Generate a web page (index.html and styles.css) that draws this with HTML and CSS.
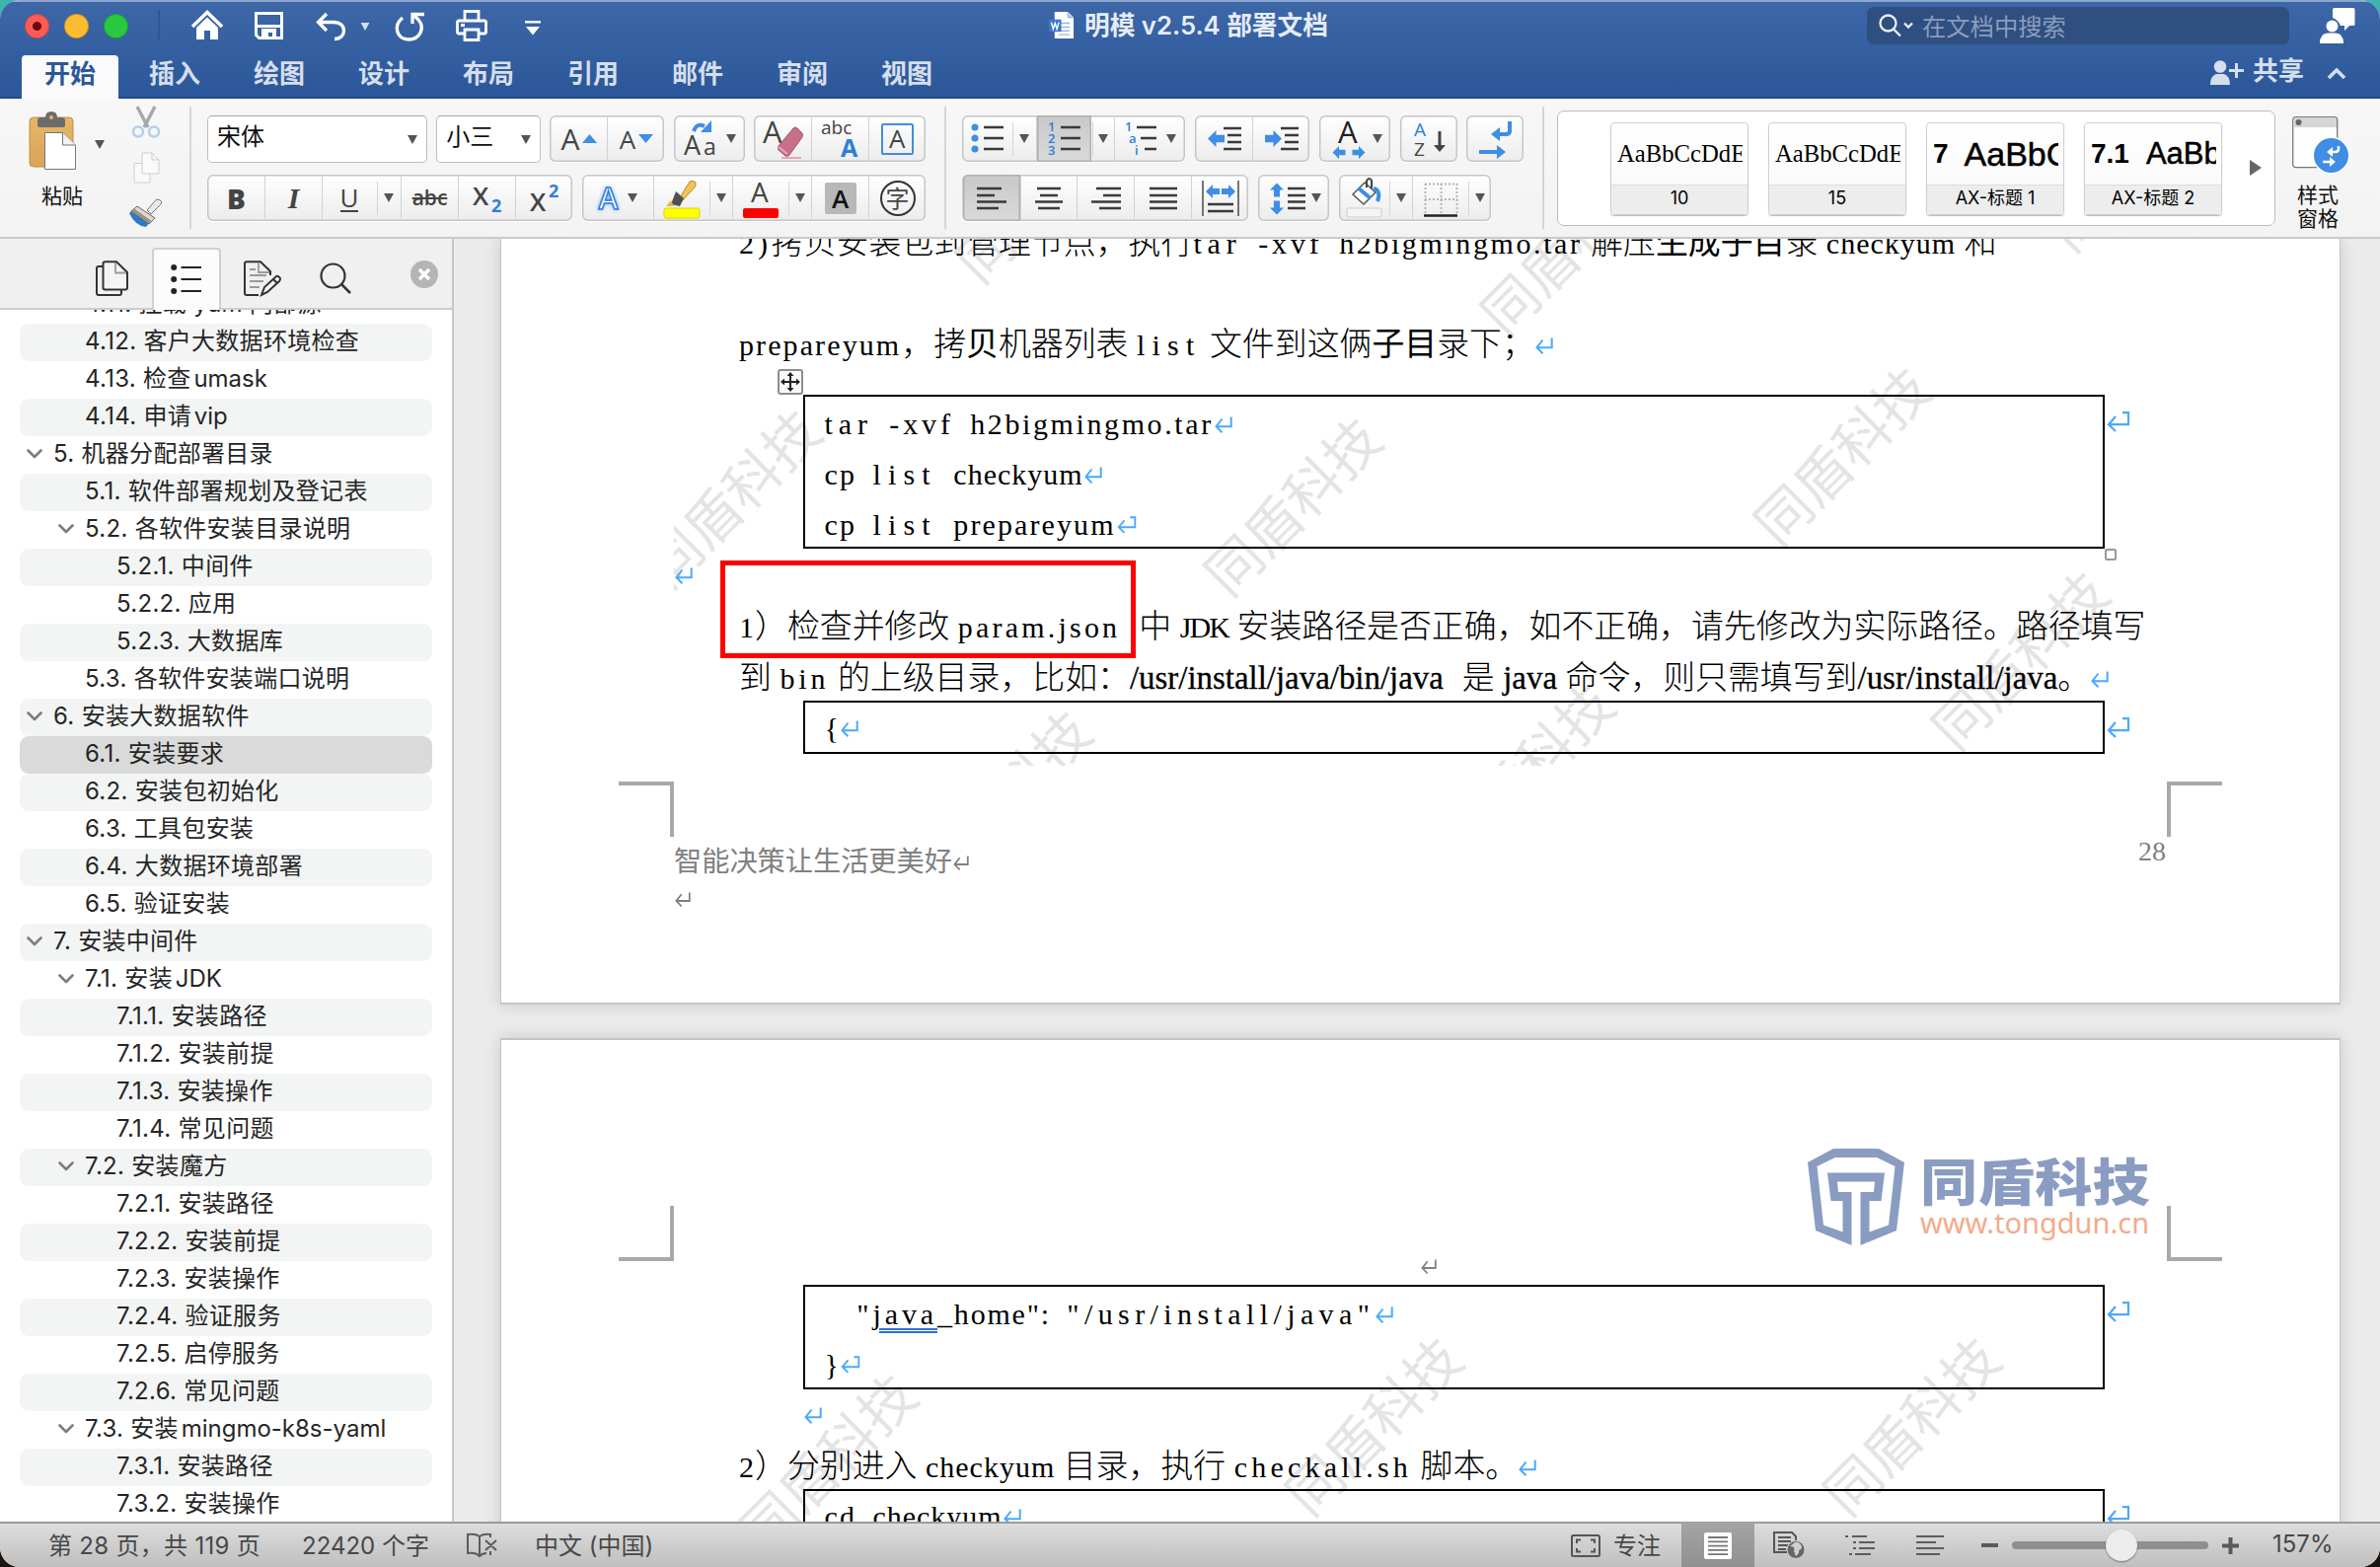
FILE: index.html
```html
<!DOCTYPE html>
<html lang="zh-CN">
<head>
<meta charset="utf-8">
<title>明模 v2.5.4 部署文档</title>
<link rel="stylesheet" href="styles.css">
</head>
<body>
<svg class="defs" width="0" height="0">
  <defs>
    <symbol id="ret" viewBox="0 0 18 17"><path d="M16.7 .5v9.7H2M7.5 2.5L1.5 10.2l6 6" fill="none" stroke="currentColor" stroke-width="2"/></symbol>
    <symbol id="rett" viewBox="0 0 24 21"><path d="M16 1.2h6v12H2.5M9 5L2 13.2 9 20" fill="none" stroke="currentColor" stroke-width="2.2"/></symbol>
    <symbol id="tri" viewBox="0 0 10 9"><path d="M0 0h10L5 9z" fill="currentColor"/></symbol>
    <symbol id="chev" viewBox="0 0 16 10"><path d="M1.5 1.5L8 8l6.500-6.500" fill="none" stroke="#7d7d7d" stroke-width="2.600" stroke-linecap="round" stroke-linejoin="round"/></symbol>
    <symbol id="larr" viewBox="0 0 16 16"><path d="M0 8l8-8v4.500h8v7H8V16z" fill="#3f8de4"/></symbol>
    <linearGradient id="gold" x1="0" y1="0" x2="0" y2="1"><stop offset="0" stop-color="#e6b768"/><stop offset="1" stop-color="#d9a458"/></linearGradient>
  </defs>
</svg>
<div class="window">
  <header class="titlebar">
    <div class="toprow">
      <div class="lights"><i class="red"></i><i class="yellow"></i><i class="green"></i></div>
      <div class="quick">
        <svg class="q-home" viewBox="0 0 34 30"><path d="M2 17L17 2.500 32 17" fill="none" stroke="#fff" stroke-width="3.500"/><path d="M6 18L17 7.500 28 18v12h-8v-9h-6v9H6z" fill="#fff"/></svg>
        <svg class="q-save" viewBox="0 0 29 28"><path d="M1.500 1.500h26v25h-23l-3-3z" fill="none" stroke="#fff" stroke-width="3"/><path d="M2 13h25v3H2zM7 17h15v10h-4v-6h-4v6H7z" fill="#fff"/></svg>
        <svg class="q-undo" viewBox="0 0 31 29"><path d="M11 2L2.500 10.500 11 19M3 10.500h15c7 0 10.500 4 10.500 8.500S25 27.500 19 27.500" fill="none" stroke="#fff" stroke-width="3.300"/></svg>
        <svg class="q-tri"><use href="#tri"/></svg>
        <svg class="q-redo" viewBox="0 0 31 31"><path d="M8 7C-2 15 2 29 14 29S31 17 24 9l-4-4M18 13V3.500h12" fill="none" stroke="#fff" stroke-width="3.300"/></svg>
        <svg class="q-print" viewBox="0 0 32 32"><path d="M9 11V1.500h14V11M9 24H2.500l-1-1V12l1-1h27l1 1v11l-1 1H23M9 20h14v10.500H9z" fill="none" stroke="#fff" stroke-width="2.800"/><path d="M5 14h4v3H5z" fill="#fff"/></svg>
        <svg class="q-more" viewBox="0 0 16 15"><path d="M0 0h16v2.500H0zM1 6h14L8 14.500z" fill="#fff"/></svg>
      </div>
      <div class="doctitle">
        <svg viewBox="0 0 27 30"><path d="M6 1h14l6 6v22H6z" fill="#fff"/><path d="M20 1v6h6" fill="#b9cdea" stroke="#8fa9cf"/><path d="M10 13h12M10 17h12M10 21h12M10 25h12" stroke="#9db7df" stroke-width="1.500"/><path d="M0 9h13v13H0z" fill="#3a78c9"/><path d="M2.500 12l2 7 2-6 2 6 2-7" fill="none" stroke="#fff" stroke-width="1.500"/></svg>
        <span>明模 v2.5.4 部署文档</span>
      </div>
      <div class="search">
        <svg viewBox="0 0 36 24"><circle cx="9.500" cy="9.500" r="8" fill="none" stroke="#e9eef6" stroke-width="2.300"/><path d="M15 15.500l7 7M26 9.500l4 4 4-4" fill="none" stroke="#e9eef6" stroke-width="2.300"/></svg>
        <span>在文档中搜索</span>
      </div>
      <svg class="feedback" viewBox="0 0 36 36"><path d="M15 0h19q1.500 0 1.500 1.500v15Q35.500 18 34 18h-4l-5 5v-5h-4Q18 12 13 10V1.500Q13 0 15 0z" fill="#fff"/><circle cx="12.500" cy="18.500" r="7.500" fill="#3b64a3"/><circle cx="12.500" cy="18.500" r="6" fill="#fff"/><path d="M0 36q0-10 8-10.500h8q8 .5 8 10.500z" fill="#fff"/></svg>
    </div>
    <nav class="tabs">
      <b class="tab on">开始</b><b class="tab">插入</b><b class="tab">绘图</b><b class="tab">设计</b><b class="tab">布局</b><b class="tab">引用</b><b class="tab">邮件</b><b class="tab">审阅</b><b class="tab">视图</b>
      <div class="share">
        <svg class="s-who" viewBox="0 0 34 25"><circle cx="10" cy="6.500" r="6.300" fill="#d5deeb"/><path d="M0 25q0-9 6-11h8q6 2 6 11z" fill="#d5deeb"/><path d="M26.500 3v15M19 10.500h15" stroke="#d5deeb" stroke-width="3"/></svg>
        <b>共享</b>
        <svg class="s-up" viewBox="0 0 20 13"><path d="M2 11l8-8 8 8" fill="none" stroke="#d5deeb" stroke-width="3.600"/></svg>
      </div>
    </nav>
  </header>

  <section class="ribbon">
    <div class="clip">
      <div class="paste">
        <svg viewBox="0 0 48 60"><rect x="0" y="6" width="44" height="50" rx="4" fill="url(#gold)" stroke="#c08e43"/><path d="M8 14V9q0-3 3-3h5q0-6 6-6t6 6h5q3 0 3 3v5q0 2-2 2H10q-2 0-2-2z" fill="#6c6c6c"/><circle cx="22" cy="6" r="2" fill="#e6b768"/><path d="M15.500 21.500h18l13 12.500v24.500h-31z" fill="#fff" stroke="#777"/><path d="M33.500 21.500V34h13" fill="#f1f1f1" stroke="#777"/></svg>
        <span>粘贴</span>
      </div>
      <svg class="tri"><use href="#tri"/></svg>
      <div class="clipcol">
        <svg viewBox="0 0 34 32"><path d="M8 0l11 21M26 0L15 21" stroke="#a9a9a9" stroke-width="3.500"/><circle cx="9" cy="25.500" r="5" fill="none" stroke="#b4cfed" stroke-width="2.500"/><circle cx="25" cy="25.500" r="5" fill="none" stroke="#b4cfed" stroke-width="2.500"/></svg>
        <svg viewBox="0 0 34 32"><path d="M5 11.500h16V31H5z" fill="#fafafa" stroke="#cfcfcf"/><path d="M13 1h10l7 7v14H13zM23 1v7h7" fill="#fafafa" stroke="#cfcfcf"/></svg>
        <svg viewBox="0 0 34 30"><path d="M18 12L27 1.500q3-1.500 5.500 1.500.5 2-1 3.500L22 16z" fill="#e9e9e9" stroke="#777"/><path d="M8 8l18 12-6 6L2 13z" fill="#d9d9d9" stroke="#666"/><path d="M2 13l18 12-3 4Q6 28 0 15z" fill="#2f79c7"/><path d="M5 10.500l17 12-2 3L2.500 13z" fill="#a88f73"/></svg>
      </div>
    </div>
    <i class="vsep"></i>
    <div class="rows font-rows">
      <div class="rrow">
        <div class="combo c-font"><span>宋体</span><svg class="tri"><use href="#tri"/></svg></div>
        <div class="combo c-size"><span>小三</span><svg class="tri"><use href="#tri"/></svg></div>
        <div class="grp">
          <div class="b w58"><span class="L l30">A</span><svg class="bt" viewBox="0 0 15 9"><path d="M0 9h15L7.500 0z" fill="#3f8de4"/></svg></div>
          <div class="b w58"><span class="L l26">A</span><svg class="bt" viewBox="0 0 15 9"><path d="M0 0h15L7.500 9z" fill="#3f8de4"/></svg></div>
        </div>
        <div class="grp"><div class="b w72"><svg class="i40" viewBox="0 0 40 40"><text x="1" y="36" font-size="27">A</text><text x="21" y="36" font-size="23">a</text><path d="M11 12Q14 3 22 7" fill="none" stroke="#3f8de4" stroke-width="4"/><path d="M29 1v12H18z" fill="#3f8de4"/></svg><svg class="tri"><use href="#tri"/></svg></div></div>
        <div class="grp">
          <div class="b w58"><svg class="i46" viewBox="0 0 46 40"><text x="3" y="24" font-size="31">A</text><path d="M34 9q2-2 4 0l5 5q1 2 0 4L30 36q-2 2-4 1l-7-6q-1-2 0-4z" fill="#c7708a" stroke="#a34f6b"/><path d="M19 28l9 7M22 39h20" stroke="#e7a6b8" stroke-width="2"/></svg></div>
          <div class="b w58"><svg class="i46" viewBox="0 0 46 40"><text x="4" y="15" font-size="19">abc</text><text x="24" y="38" font-size="25" font-weight="700" class="blue">A</text></svg></div>
          <div class="b w58"><span class="L boxed">A</span></div>
        </div>
      </div>
      <div class="rrow">
        <div class="grp">
          <div class="b w58"><span class="L bold">B</span></div>
          <div class="b w58"><span class="L ital">I</span></div>
          <div class="b w55"><span class="L und">U</span></div>
          <div class="b w25 mini"><svg class="tri"><use href="#tri"/></svg></div>
          <div class="b w58"><span class="L strike">abc</span></div>
          <div class="b w58"><svg class="i40" viewBox="0 0 40 40"><text x="5" y="27" font-size="26" font-weight="600">X</text><text x="24" y="34" font-size="18" font-weight="700" class="blue">2</text></svg></div>
          <div class="b w58"><svg class="i40" viewBox="0 0 40 40"><text x="5" y="33" font-size="26" font-weight="600">X</text><text x="24" y="19" font-size="18" font-weight="700" class="blue">2</text></svg></div>
        </div>
        <div class="grp">
          <div class="b w72"><span class="L glow">A</span><svg class="tri"><use href="#tri"/></svg></div>
          <div class="b w56"><svg class="i40" viewBox="0 0 40 40"><path d="M20 16L28 3q3-2 6 1 1 3-2 6L19 24z" fill="#f0c458" stroke="#b98a28"/><path d="M9 26l5-13 8 7-4 8z" fill="#505050"/><path d="M9 22l-5 6h8z" fill="#e7b645"/><rect x="2" y="30" width="36" height="10" rx="2" fill="#ff0" stroke="#d6d600"/></svg></div>
          <div class="b w24 mini"><svg class="tri"><use href="#tri"/></svg></div>
          <div class="b w56"><svg class="i40" viewBox="0 0 40 40"><text x="10" y="24" font-size="28">A</text><rect x="2" y="30" width="36" height="10" rx="2" fill="red"/></svg></div>
          <div class="b w24 mini"><svg class="tri"><use href="#tri"/></svg></div>
          <div class="b w58"><span class="L shade">A</span></div>
          <div class="b w58"><span class="L circ">字</span></div>
        </div>
      </div>
    </div>
    <i class="vsep s2"></i>
    <div class="rows para-rows">
      <div class="rrow">
        <div class="grp">
          <div class="b w50"><svg class="i34" viewBox="0 0 34 36"><circle cx="4" cy="6" r="3.500" fill="#3f8de4"/><circle cx="4" cy="17" r="3.500" fill="#3f8de4"/><circle cx="4" cy="28" r="3.500" fill="#3f8de4"/><path d="M13 6h20M13 17h20M13 28h20" class="ln"/></svg></div>
          <div class="b w25 mini"><svg class="tri"><use href="#tri"/></svg></div>
          <div class="b w56 pressed"><svg class="i34" viewBox="0 0 34 36"><g font-size="13" font-weight="600"><text x="0" y="10" class="blue">1</text><text x="0" y="22" class="blue">2</text><text x="0" y="34" class="blue">3</text></g><path d="M13 6h20M13 17h20M13 28h20" class="ln"/></svg></div>
          <div class="b w23 mini"><svg class="tri"><use href="#tri"/></svg></div>
          <div class="b w72"><svg class="i34" viewBox="0 0 34 36"><g font-size="13" font-weight="600"><text x="1" y="10" class="blue">1</text><text x="5" y="22" class="blue">a</text><text x="11" y="34" class="blue">i</text></g><path d="M13 6h20M17 17h16M21 28h12" class="ln"/></svg><svg class="tri"><use href="#tri"/></svg></div>
        </div>
        <div class="grp">
          <div class="b w58"><svg class="i34" viewBox="0 0 34 36"><use href="#larr" x="0" y="8" width="17" height="19"/><path d="M16 7h18M20 14h14M20 21h14M16 28h18" class="ln"/></svg></div>
          <div class="b w58"><svg class="i34" viewBox="0 0 34 36"><g transform="translate(17 0) scale(-1 1)"><use href="#larr" x="0" y="8" width="17" height="19"/></g><path d="M16 7h18M20 14h14M20 21h14M16 28h18" class="ln"/></svg></div>
        </div>
        <div class="grp"><div class="b w72"><svg class="i40" viewBox="0 0 40 40"><text x="9" y="24" font-size="31" class="dk">A</text><use href="#larr" x="2" y="27" width="16" height="13"/><g transform="translate(38 0) scale(-1 1)"><use href="#larr" x="0" y="27" width="16" height="13"/></g></svg><svg class="tri"><use href="#tri"/></svg></div></div>
        <div class="grp"><div class="b w58"><svg class="i40" viewBox="0 0 40 40"><text x="5" y="17" font-size="19" class="blue">A</text><text x="5" y="37" font-size="19">Z</text><path d="M31 12v16" stroke="#444" stroke-width="3"/><path d="M25 26h12l-6 7z" fill="#444"/></svg></div></div>
        <div class="grp"><div class="b w58"><svg class="i40" viewBox="0 0 40 40"><path d="M34 2v10q0 3-4 3h-6" fill="none" stroke="#3f8de4" stroke-width="4"/><path d="M15 15l9-7v14zM21 26l9 7-9 7z" fill="#3f8de4"/><path d="M3 33h19" stroke="#3f8de4" stroke-width="4"/></svg></div></div>
      </div>
      <div class="rrow">
        <div class="grp">
          <div class="b w59 pressed"><svg class="i30" viewBox="0 0 30 30"><path d="M0 5h25M0 12h18M0 18.500h30M0 25h22" class="ln"/></svg></div>
          <div class="b w57"><svg class="i30" viewBox="0 0 30 30"><path d="M3 5h24M6 12h18M1 18.500h28M4 25h22" class="ln"/></svg></div>
          <div class="b w58"><svg class="i30" viewBox="0 0 30 30"><path d="M5 5h25M12 12h18M0 18.500h30M8 25h22" class="ln"/></svg></div>
          <div class="b w58"><svg class="i30" viewBox="0 0 30 30"><path d="M1 5h28M1 12h28M1 18.500h28M1 25h28" class="ln"/></svg></div>
          <div class="b w58"><svg class="i40" viewBox="0 0 40 40"><path d="M2 2v36M38 2v36" stroke="#666" stroke-width="1.800"/><use href="#larr" x="5" y="6" width="14" height="14"/><g transform="translate(40 0) scale(-1 1)"><use href="#larr" x="5" y="6" width="14" height="14"/></g><path d="M7 26h26M7 33h26" class="ln"/></svg></div>
        </div>
        <div class="grp"><div class="b w72"><svg class="i40" viewBox="0 0 40 40"><g transform="translate(16 4) rotate(90)"><use href="#larr" width="15" height="14"/></g><g transform="translate(2 37) rotate(-90)"><use href="#larr" width="15" height="14"/></g><path d="M20 10h18M20 17h18M20 23.500h18M20 30h18" class="ln"/></svg><svg class="tri"><use href="#tri"/></svg></div></div>
        <div class="grp">
          <div class="b w50"><svg class="i40" viewBox="0 0 40 40"><path d="M8 16L20 4l11 10-12 12z" fill="#fff" stroke="#555" stroke-width="1.500"/><path d="M14 10l12 10M29 10q8 2 4 13" stroke="#3f8de4" stroke-width="4" fill="none"/><path d="M22 9V2q3-4 5 0v8" fill="none" stroke="#444" stroke-width="2"/><rect x="2" y="30" width="35" height="9" rx="1.500" fill="#f5f5f5" stroke="#ccc"/></svg></div>
          <div class="b w24 mini"><svg class="tri"><use href="#tri"/></svg></div>
          <div class="b w56"><svg class="i40" viewBox="0 0 40 40"><path d="M4 5.500h33M4 21h33M4.500 5v32M20.500 5v32M36.500 5v32" stroke="#b5b5b5" stroke-width="2" stroke-dasharray="2 2"/><path d="M3 37.500h34" stroke="#222" stroke-width="2.500"/></svg></div>
          <div class="b w24 mini"><svg class="tri"><use href="#tri"/></svg></div>
        </div>
      </div>
    </div>
    <i class="vsep s3"></i>
    <div class="styles">
      <div class="tile"><div class="pv"><span class="pv-s">AaBbCcDdEe</span></div><em>10</em></div>
      <div class="tile"><div class="pv"><span class="pv-s">AaBbCcDdEe</span></div><em>15</em></div>
      <div class="tile"><div class="pv"><b>7</b><span class="pv-1">AaBbC</span></div><em>AX-标题 1</em></div>
      <div class="tile"><div class="pv"><b>7.1</b><span class="pv-2">AaBb</span></div><em>AX-标题 2</em></div>
      <svg class="more" viewBox="0 0 12 16"><path d="M0 0l12 8-12 8z" fill="#666"/></svg>
    </div>
    <div class="pane">
      <svg viewBox="0 0 58 58"><rect x=".7" y=".7" width="45" height="51" rx="3" fill="#fdfdfd" stroke="#777" stroke-width="1.300"/><path d="M1.500 3q0-1.500 1.500-1.500h40.500q1.500 0 1.500 1.500v8H1.500z" fill="#d6d6d6"/><circle cx="6.500" cy="6" r="3" fill="#666"/><circle cx="39.500" cy="39.500" r="19" fill="#fff"/><circle cx="39.500" cy="39.500" r="17.500" fill="#3f8de4"/><path d="M47 30v3q0 3-4 3h-3M31 46h8" fill="none" stroke="#fff" stroke-width="2.500"/><path d="M35 36l6-5v10zM38 41l6 5-6 5z" fill="#fff"/></svg>
      <span>样式<br>窗格</span>
    </div>
  </section>

  <main class="work">
    <aside class="nav">
      <div class="navtabs">
        <svg class="n1" viewBox="0 0 33 36"><path d="M7.500 6H3q-2 0-2 2v25q0 2 2 2h21q2 0 2-2v-3" fill="none" stroke="#333" stroke-width="2"/><path d="M9.500 1.200H21L32 12v15.500q0 2-2 2H9.500q-2 0-2-2v-24q0-2.300 2-2.300z" fill="#f4f4f4" stroke="#333" stroke-width="2"/><path d="M20 2v10.500h11" fill="none" stroke="#999" stroke-width="1.800"/></svg>
        <div class="ntab"><svg viewBox="0 0 31 32"><circle cx="3.200" cy="4" r="3" fill="#222"/><circle cx="3.200" cy="16" r="3" fill="#222"/><circle cx="3.200" cy="28" r="3" fill="#222"/><path d="M10.500 4H31M10.500 16H31M10.500 28H31" stroke="#222" stroke-width="2.200"/></svg></div>
        <svg class="n3" viewBox="0 0 39 36"><path d="M27 15v-4L17 1.200H3q-2 0-2 2V33q0 2 2 2h12" fill="none" stroke="#333" stroke-width="2"/><path d="M15 2v10h11" fill="none" stroke="#999" stroke-width="1.800"/><path d="M6 9h6M6 15h17M6 21h14M6 27h10" stroke="#999" stroke-width="1.800"/><path d="M18 35l3-8 12-11q2-1 4 2 0 2-1 3L24 32zM30 19l4 4" fill="#f4f4f4" stroke="#333" stroke-width="2"/></svg>
        <svg class="n4" viewBox="0 0 32 32"><circle cx="13.500" cy="13.500" r="12" fill="none" stroke="#333" stroke-width="2.200"/><path d="M22 22l9 9" stroke="#333" stroke-width="2.500"/></svg>
        <svg class="n5" viewBox="0 0 28 28"><circle cx="14" cy="14" r="14" fill="#b5b5b5"/><path d="M9 9l10 10M19 9L9 19" stroke="#fff" stroke-width="3.400"/></svg>
      </div>
      <ul class="toc">
        <li class="l2">4.11. 挂载 yum 内部源</li>
        <li class="l2">4.12. 客户大数据环境检查</li>
        <li class="l2">4.13. 检查<span> umask</span></li>
        <li class="l2">4.14. 申请<span> vip</span></li>
        <li class="l1"><svg><use href="#chev"/></svg>5. 机器分配部署目录</li>
        <li class="l2">5.1. 软件部署规划及登记表</li>
        <li class="l2"><svg><use href="#chev"/></svg>5.2. 各软件安装目录说明</li>
        <li class="l3">5.2.1. 中间件</li>
        <li class="l3">5.2.2. 应用</li>
        <li class="l3">5.2.3. 大数据库</li>
        <li class="l2">5.3. 各软件安装端口说明</li>
        <li class="l1"><svg><use href="#chev"/></svg>6. 安装大数据软件</li>
        <li class="l2 sel">6.1. 安装要求</li>
        <li class="l2">6.2. 安装包初始化</li>
        <li class="l2">6.3. 工具包安装</li>
        <li class="l2">6.4. 大数据环境部署</li>
        <li class="l2">6.5. 验证安装</li>
        <li class="l1"><svg><use href="#chev"/></svg>7. 安装中间件</li>
        <li class="l2"><svg><use href="#chev"/></svg>7.1. 安装<span> JDK</span></li>
        <li class="l3">7.1.1. 安装路径</li>
        <li class="l3">7.1.2. 安装前提</li>
        <li class="l3">7.1.3. 安装操作</li>
        <li class="l3">7.1.4. 常见问题</li>
        <li class="l2"><svg><use href="#chev"/></svg>7.2. 安装魔方</li>
        <li class="l3">7.2.1. 安装路径</li>
        <li class="l3">7.2.2. 安装前提</li>
        <li class="l3">7.2.3. 安装操作</li>
        <li class="l3">7.2.4. 验证服务</li>
        <li class="l3">7.2.5. 启停服务</li>
        <li class="l3">7.2.6. 常见问题</li>
        <li class="l2"><svg><use href="#chev"/></svg>7.3. 安装<span> mingmo-k8s-yaml</span></li>
        <li class="l3">7.3.1. 安装路径</li>
        <li class="l3">7.3.2. 安装操作</li>
      </ul>
    </aside>
    <div class="canvas">
      <article class="page p1">
        <div class="marks">
          <span class="wm a1">同盾科技</span><span class="wm a2">同盾科技</span><span class="wm a3">同盾科技</span>
          <span class="wm a4">同盾科技</span><span class="wm a5">同盾科技</span><span class="wm a6">同盾科技</span>
          <span class="wm a7">同盾科技</span><span class="wm a8">同盾科技</span><span class="wm a9">同盾科技</span>
        </div>
        <p class="ln1"><code class="k4">2)</code>拷贝安装包到管理节点，执行<code><span class="k6">tar</span> <span class="k4">-xvf</span> <span class="k26">h2bigmingmo.tar</span></code><i class="g"></i>解压<b>生成子目</b>录<i class="g"></i><code class="k1">checkyum</code><i class="g"></i>和</p>
        <p class="ln2"><code class="k2">prepareyum</code>，拷<b>贝</b>机器列表<i class="g"></i><code class="k7">list</code><i class="g"></i>文件到这俩<b>子目</b>录下；<svg class="ret"><use href="#ret"/></svg></p>
        <div class="cell c1">
          <svg class="anchor" viewBox="0 0 26 26"><rect x="1" y="1" width="24" height="24" rx="2" fill="#fafafa" stroke="#8d8d8d" stroke-width="2"/><path d="M13 5v16M5 13h16" stroke="#222" stroke-width="2"/><path d="M13 3l3.500 4h-7zM13 23l3.500-4h-7zM3 13l4-3.500v7zM23 13l-4-3.500v7z" fill="#222"/></svg>
          <p><code><span class="k6">tar</span> <span class="k4">-xvf</span> <span class="k26">h2bigmingmo.tar</span></code><svg class="ret"><use href="#ret"/></svg></p>
          <p><code><span class="k2">cp</span> <span class="k7">list</span> <span class="k1">checkyum</span></code><svg class="ret"><use href="#ret"/></svg></p>
          <p><code><span class="k2">cp</span> <span class="k7">list</span> <span class="k2">prepareyum</span></code><svg class="ret hook"><use href="#rett"/></svg></p>
          <svg class="endmark"><use href="#rett"/></svg>
          <i class="handle"></i>
        </div>
        <p class="blank"><svg class="ret"><use href="#ret"/></svg></p>
        <p><span class="redbox"></span><code class="k1">1</code>）检查并修改<i class="g"></i><code class="k3">param.json</code><i class="g2"></i>中<i class="g"></i><code class="kn">JDK</code><i class="g"></i>安装路径是否正确，如不正确，请先修改为实际路径。路径填写</p>
        <p>到<i class="g"></i><code class="k4">bin</code><i class="g"></i>的上级目录，比如：<span class="tm">/usr/install/java/bin/java</span><i class="g2"></i>是<i class="g"></i><span class="tm">java</span><i class="g"></i>命令，则只需填写到<span class="tm">/usr/install/java</span>。<svg class="ret"><use href="#ret"/></svg></p>
        <div class="cell c2">
          <p><code class="brace k1">{</code><svg class="ret"><use href="#ret"/></svg></p>
          <svg class="endmark"><use href="#rett"/></svg>
        </div>
        <div class="corners low"><i></i><i></i></div>
        <div class="foot"><span>智能决策让生活更美好<svg class="ret"><use href="#ret"/></svg></span><em>28</em></div>
        <div class="foot-ret"><svg class="ret"><use href="#ret"/></svg></div>
      </article>
      <article class="page p2">
        <div class="marks">
          <span class="wm b1">同盾科技</span><span class="wm b2">同盾科技</span><span class="wm b3">同盾科技</span>
        </div>
        <div class="corners high"><i></i>
          <div class="logo">
            <svg viewBox="0 0 98 98"><path fill-rule="evenodd" fill="#8a9cc2" d="M26 0H72L98 14 90 83 53.500 98V44H67L68 33.500H30L31 44H44.500V98L8 83 0 14zM28 9L9.500 18 16 77.500 35.500 84.500V53H23.500L20 24.500H78L74.500 53H62.500V84.500L82 77.500 88.500 18 70 9z"/></svg>
            <div><strong>同盾科技</strong><span>www.tongdun.cn</span></div>
          </div>
          <i></i>
        </div>
        <div class="head-ret"><svg class="ret"><use href="#ret"/></svg></div>
        <div class="cell c3">
          <p><code>  <span class="k4">"</span><u class="k4">java</u><span class="k18">_home":</span> <span class="k5">"/usr/install/java"</span></code><svg class="ret"><use href="#ret"/></svg></p>
          <p><code class="k1">}</code><svg class="ret hook"><use href="#rett"/></svg></p>
          <svg class="endmark"><use href="#rett"/></svg>
        </div>
        <p class="blank in"><svg class="ret"><use href="#ret"/></svg></p>
        <p><code class="k1">2</code>）分别进入<i class="g"></i><code class="k1">checkyum</code><i class="g"></i>目录，执行<i class="g"></i><code class="k42">checkall.sh</code><i class="g"></i>脚本。<svg class="ret"><use href="#ret"/></svg></p>
        <div class="cell c4">
          <p><code><span class="k2">cd</span> <span class="k1">checkyum</span></code><svg class="ret"><use href="#ret"/></svg></p>
          <svg class="endmark"><use href="#rett"/></svg>
        </div>
      </article>
    </div>
  </main>

  <footer class="status">
    <span class="t1">第 28 页，共 119 页</span><span class="t2">22420 个字</span>
    <svg class="book" viewBox="0 0 33 27"><path d="M13 4Q9 1 1 2v19q8-1 12 3 3-3 7-3M13 4v20M13 4q4-3 11-2v3M24 19v4M19 8l11 10M30 8L19 18" fill="none" stroke="#5c5c5c" stroke-width="2"/></svg>
    <span class="t3">中文 (中国)</span>
    <div class="right">
      <svg class="focus" viewBox="0 0 30 23"><rect x="1" y="1" width="28" height="21" rx="1.500" fill="none" stroke="#555" stroke-width="2"/><path d="M6 9V5.500h4M20 5.500h4V9M24 14v3.500h-4M10 17.500H6V14" fill="none" stroke="#555" stroke-width="2"/></svg>
      <span class="t4">专注</span>
      <div class="seg"><svg viewBox="0 0 28 27"><rect width="28" height="27" rx="2" fill="#fff"/><path d="M4 5h20M4 9.300h20M4 13.600h20M4 17.900h20M4 22.200h20" stroke="#777" stroke-width="1.800"/></svg></div>
      <svg class="web" viewBox="0 0 33 28"><path d="M14 21H1V1h18l4 4v6" fill="none" stroke="#555" stroke-width="2"/><path d="M5 6h13M5 10h13M5 14h10M5 18h8" stroke="#555" stroke-width="1.800"/><circle cx="23" cy="18.500" r="9" fill="#666" stroke="#cfcfcf"/><path d="M17 15q6 0 4 5l2 5q4-3 3-6 3 0 3-4-3-5-7-4z" fill="#cfcfcf"/></svg>
      <svg class="outl" viewBox="0 0 31 22"><path d="M0 2h3M7 2h15M8 8h3M14 8h16M8 14h3M14 14h16M4 20h3M10 20h16" stroke="#5c5c5c" stroke-width="2"/></svg>
      <svg class="draft" viewBox="0 0 28 22"><path d="M0 2h28M0 8h20M0 14h28M0 20h24" stroke="#5c5c5c" stroke-width="2.200"/></svg>
      <i class="minus"></i>
      <div class="slider"><i></i></div>
      <svg class="plus" viewBox="0 0 17 17"><path d="M8.500 0v17M0 8.500h17" stroke="#5a5a5a" stroke-width="4"/></svg>
      <span class="t5">157%</span>
    </div>
  </footer>
</div>
</body>
</html>
```
FILE: styles.css
```css
*{box-sizing:border-box}
html,body{margin:0;height:100%}
body{width:2412px;height:1588px;overflow:hidden;background:linear-gradient(#3fb3ae 0 50%,#1b1512 50%);font-family:Inter,"Noto Sans CJK SC",sans-serif;color:#222}
svg{display:block;flex:none;overflow:visible}
.defs{position:absolute}
p,ul{margin:0;padding:0}
.window{width:2412px;height:1588px;display:flex;flex-direction:column;border-radius:20px;overflow:hidden;background:#ebebeb}

/* Title bar */
.titlebar{height:100px;background:linear-gradient(#3d67a7,#2b579a);border-top:2px solid #8ba6cf;border-bottom:2px solid #254a85;flex:none}
.toprow{height:54px;display:flex;align-items:flex-start;position:relative}
.lights{display:flex;gap:15px;margin:12px 0 0 25px;width:135px;flex:none}
.lights i{width:25px;height:25px;border-radius:50%;border:1px solid #0003}
.red{background:radial-gradient(circle,#6b0a08 0 4px,#fc5b56 5px)}
.yellow{background:#fdbb2f}
.green{background:#28c840}
.quick{display:flex;border-left:2px solid #315690;height:31px;margin-top:8px;align-items:flex-start}
.q-home{width:34px;height:30px;margin-left:31px}
.q-save{width:29px;height:28px;margin:2px 0 0 31px}
.q-undo{width:31px;height:29px;margin:2px 0 0 33px}
.q-tri{width:10px;height:8px;margin:13px 0 0 14px;color:#d4deec}
.q-redo{width:31px;height:31px;margin:1px 0 0 25px}
.q-print{width:32px;height:32px;margin-left:31px}
.q-more{width:16px;height:15px;margin:11px 0 0 38px}
.doctitle{display:flex;align-items:center;gap:10px;margin:4px 0 0 515px;height:38px;color:#e6ecf5;font-size:25.700px;font-weight:600;white-space:nowrap;width:300px}
.doctitle svg{width:26px;height:29px}
.doctitle span{margin-top:-3px}
.search{margin:5px 0 0 529px;width:428px;height:38px;border-radius:7px;background:#2e4f80;display:flex;align-items:center;padding-left:12px;gap:8px;color:#8a9dbd;font-size:24.300px;flex:none}
.search svg{width:36px;height:24px}
.search span{margin-top:-1px}
.feedback{width:36px;height:36px;margin:6px 0 0 31px}
.tabs{display:flex;gap:8px;padding-left:22px;height:44px}
.tab{width:98px;height:43px;border-radius:4px 4px 0 0;color:#d5deeb;font-size:26px;line-height:37px;text-align:center;font-weight:600}
.tab.on{background:#fafafa;color:#2b579a;height:44px}
.share{display:flex;margin-left:1264px;color:#d5deeb;font-size:26px;line-height:32px}
.s-who{width:34px;height:25px;margin:5px 9px 0 0}
.share b{font-weight:600}
.s-up{width:20px;height:13px;margin:12px 0 0 23px}

/* Ribbon */
.ribbon{height:142px;background:linear-gradient(#f7f7f7,#f3f3f3);border-bottom:2px solid #c9c9c9;display:flex;flex:none;color:#111}
.clip{width:192px;display:flex;flex:none}
.paste{margin:13px 0 0 30px;width:66px;display:flex;flex-direction:column;font-size:21px;text-align:center}
.paste svg{width:48px;height:60px}
.paste span{line-height:26px;margin-top:13px}
.tri{width:10px;height:9px;color:#555}
.clip>.tri{margin-top:42px}
.clipcol{margin:8px 0 0 25px;display:flex;flex-direction:column;gap:14px}
.clipcol svg{width:34px;height:32px}
.vsep{width:2px;height:124px;margin-top:8px;background:#d5d5d5;flex:none}
.rows{display:flex;flex-direction:column;gap:13px;padding-top:17px;flex:none}
.font-rows{margin-left:16px;width:747px}
.para-rows{margin-left:16px;width:588px}
.para-rows .rrow:first-child .grp:nth-child(n+4){margin-left:-.5px}
.rrow{display:flex;gap:10px;height:47px}
.rrow .grp{height:47px}
.font-rows .rrow:first-child{gap:9.200px}
.combo{height:48px;border:1px solid #bdbdbd;border-top-color:#a5a5a5;border-radius:5px;background:#fff;display:flex;align-items:center;justify-content:space-between;font-size:24px;padding:0 9px}
.combo span{line-height:40px;margin-top:-5px}
.c-font{width:223px}
.c-size{width:106px}
.grp{display:flex;border-radius:6px;background:linear-gradient(#fff,#ececec);box-shadow:inset 0 0 0 1.500px #c6c6c6,0 1px 0 #fff}
.b{display:flex;align-items:center;justify-content:center;gap:3px;border-left:1px solid #d2d2d2;height:47px;color:#444}
.b:first-child,.b.mini{border-left-color:transparent}
.b.mini{background:linear-gradient(#d5d5d5,#d5d5d5) 0 50%/1px 34px no-repeat}
.pressed{background:linear-gradient(#c9c9c9,#d9d9d9);box-shadow:inset 0 0 0 1.500px #b0b0b0}
.pressed:first-child{border-radius:6px 0 0 6px}
.w23{width:23px}.w24{width:24px}.w25{width:25px}.w50{width:50px}.w55{width:55px}.w56{width:56px}.w57{width:57px}.w58{width:58px}.w59{width:59px}.w72{width:72px}
.i30{width:30px;height:30px}.i34{width:34px;height:36px}.i40{width:40px;height:40px}.i46{width:46px;height:40px}
.w72 .i40{margin-right:1px}
.w72 .i34{margin-right:6px}
.b text{fill:#444;font-family:"Open Sans","Noto Sans",sans-serif}
.b text.blue{fill:#2f7fd8}
.b text.dk{fill:#222}
.ln{stroke:#3a3a3a;stroke-width:2.600;fill:none}
.bt{width:15px;height:9px}
.L{font-family:"Open Sans","Noto Sans CJK SC",sans-serif;line-height:1}
.l30{font-size:30px}.l26{font-size:26px}
.boxed{border:2.500px solid #3f8de4;width:33px;height:32px;font-size:26px;line-height:27px;text-align:center;border-radius:2px}
.bold{font-weight:800;font-size:28px}
.ital{font-family:"Liberation Serif",serif;font-style:italic;font-weight:700;font-size:30px}
.und{font-size:26px;border-bottom:2px solid #444;line-height:26px}
.strike{font-size:21px;text-decoration:line-through;font-weight:600}
.glow{font-size:30px;font-weight:600;color:#fff;-webkit-text-stroke:1.500px #2f7fd8;text-shadow:0 0 4px #3f8de4;margin-right:7px}
.shade{background:#b8b8b8;width:32px;height:32px;line-height:32px;font-size:26px;font-weight:600;text-align:center;color:#111;border-radius:2px}
.circ{border:2px solid #333;border-radius:50%;width:36px;height:36px;font-size:24px;line-height:31px;text-align:center}
.styles{margin:12px 0 0 13px;width:728px;height:117px;border:1.500px solid #bcbcbc;border-radius:7px;background:#fff;display:flex;gap:20px;padding:11px 0 0 53px;flex:none}
.tile{width:140px;height:94px;border:1px solid #cfcfcf;border-radius:4px;box-shadow:0 1px 1px #bbb;display:flex;flex-direction:column;color:#000;background:linear-gradient(#fff,#f8f8f8);flex:none}
.pv{height:62px;margin:0 5px 0 6px;overflow:hidden;display:flex;align-items:center;white-space:nowrap}
.pv-s{font-family:"Liberation Serif",serif;font-size:24.700px}
.pv b{font:700 28px "Liberation Sans",sans-serif}
.pv-1{font:500 34px "Liberation Sans",sans-serif;margin-left:16px;-webkit-text-stroke:.5px #000}
.pv-2{font:500 31px "Liberation Sans",sans-serif;margin-left:17px;-webkit-text-stroke:.5px #000}
.tile em{font-style:normal;font-size:18px;text-align:center;border-top:1px solid #ddd;background:#ededed;flex:1;line-height:26px}
.more{width:12px;height:16px;margin:38px 0 0 8px}
.pane{margin:18px 0 0 17px;font-size:21px;line-height:25px}
.pane svg{width:58px;height:58px}
.pane span{display:block;margin:10px 0 0 5px;line-height:24px}

/* Navigation pane */
.work{flex:1;display:flex;min-height:0}
.nav{width:460px;border-right:2px solid #c8c8c8;background:#fff;display:flex;flex-direction:column;flex:none;overflow:hidden}
.navtabs{height:72px;background:#f0f0f0;border-bottom:2px solid #cdcdcd;display:flex;flex:none}
.n1{width:33px;height:36px;margin:22px 0 0 97px}
.ntab{width:70px;height:64px;margin:9px 0 0 24px;background:#fcfcfc;border:2px solid #d0d0d0;border-bottom:0;border-radius:4px 4px 0 0}
.ntab svg{width:31px;height:32px;margin:14px 0 0 17px}
.n3{width:39px;height:36px;margin:22px 0 0 23px}
.n4{width:32px;height:32px;margin:24px 0 0 38px}
.n5{width:28px;height:28px;margin:22px 0 0 60px}
.toc{list-style:none;margin:-24px 0 0;padding:0 20px;font-size:24px;color:#262626;clip-path:inset(24px 0 0 0)}
.toc li{height:38px;line-height:36px;padding-bottom:2px;border-radius:9px;display:flex;align-items:center;white-space:pre;letter-spacing:.3px}
.toc li span{word-spacing:-4px;letter-spacing:0}
.toc li:nth-child(even){background:#f3f5f4}
.toc li.sel{background:#dadada}
.l1{padding-left:34px}.l2{padding-left:66px}.l3{padding-left:98px}
.toc svg{width:16px;height:10px;margin:0 11px 0 -27px}

/* Pages */
.canvas{flex:1;padding-left:47px;overflow:hidden;background:#ebebeb}
.page{width:1865px;background:#fff;border:1.500px solid #c4c4c4;box-shadow:0 0 16px #00000026;position:relative;font:300 32.900px/52px "Noto Sans CJK SC",sans-serif;color:#000;overflow:hidden}
.p1{height:776px;border-top:0;border-bottom-width:2px;margin-bottom:34px}
.p2{height:600px;border-top-width:2px}
.page p{height:52px;margin-left:241px;position:relative;top:-3px;white-space:pre}
/* Latin runs sit on a 16.4px half-width cell, so each run gets its own tracking */
.page code{font:400 30px/40px "Liberation Serif",serif;word-spacing:8.900px}
.k1{letter-spacing:1px}.k18{letter-spacing:1.800px}.k2{letter-spacing:2.100px}.k26{letter-spacing:2.600px}
.k3{letter-spacing:3.200px}.k4{letter-spacing:3.900px}.k42{letter-spacing:4.200px}.k5{letter-spacing:5.400px}
.k6{letter-spacing:5.900px}.k7{letter-spacing:7.200px}.kn{letter-spacing:-1.900px}
.page p b{font-weight:400}
.g{display:inline-block;width:8.500px}
.g2{display:inline-block;width:19px}
.tm{font-family:"Liberation Serif",serif;font-weight:400;-webkit-text-stroke:.3px #000}
.ret{display:inline-block;width:18px;height:17px;color:#4aa9fb;vertical-align:1px;margin-left:1px}
.ret.hook{width:20px;height:18px}
.page .ln1{margin-top:-22px}
.page .ln2{margin-top:51px}
.cell{position:relative;margin-left:305.500px;width:1319px;border:2px solid #000}
.page .cell p{margin-left:20px;height:51px;line-height:51px;top:-4px}
.c1{height:156px;margin-top:25px;padding-top:2px}
.c2{height:54px;margin-top:-3px}
.c3{height:106px;margin-top:14px;padding-top:3px}
.page .c3 p{height:50px;line-height:50px}
.page .c3 p+p{top:-3px}
.c4{height:120px;margin-top:-3px}
.anchor{position:absolute;left:-28px;top:-28px;width:26px;height:26px}
.handle{position:absolute;right:-14px;bottom:-14px;width:12px;height:12px;border:2px solid #999;border-radius:2px;background:#fff}
.endmark{position:absolute;right:-28px;top:15px;width:24px;height:21px;color:#4aa9fb}
.page .blank{height:48px;line-height:48px;margin:2px 0 3px 175px}
.page .blank.in{margin:1px 0 3px 306px}
.redbox{position:absolute;left:-19px;top:-38px;width:421px;height:99px;border:5px solid #f00}
.corners{display:flex;justify-content:space-between;margin:0 119px}
.corners>i{width:56px;height:56px;border:4px solid #a9a9a9;border-width:4px 4px 0 0}
.corners>i:last-child{border-width:4px 0 0 4px}
.low{margin-top:28px}
.high{margin-top:110px;height:114px;align-items:flex-end;position:relative}
.high>i{border-width:0 4px 4px 0}
.high>i:last-child{border-width:0 0 4px 4px}
.foot{display:flex;justify-content:space-between;height:48px;margin:-1px 176px 0 175px;line-height:48px;font-size:28.200px;font-weight:400;color:#808080}
.foot .ret,.foot-ret .ret,.head-ret .ret{color:#808080;width:16px;height:15px}
.foot em{font:400 28px/32px "Liberation Serif",serif}
.foot-ret{margin:9px 0 0 175px;height:16px;line-height:16px}
.foot-ret .ret,.head-ret .ret{display:block}
.head-ret{margin:-2px 0 0 931px;height:12px}
.logo{display:flex;gap:16px;margin:0 17px 16px auto;height:98px}
.logo svg{width:98px;height:98px}
.logo div{width:233px;white-space:nowrap}
.logo strong{display:block;width:204px;font-size:51px;font-weight:900;line-height:62px;color:#8a9cc2;transform:scaleX(1.14);transform-origin:0 50%}
.logo span{display:block;font:400 29px/34px "Noto Sans",sans-serif;color:#f3ab8c;margin-top:-4px}
.page u{text-decoration:underline double #2f6fe0 2px;text-underline-offset:4px}
.marks{position:absolute;left:175px;top:0;width:1520px;height:534px;overflow:hidden}
.p2 .marks{height:600px}
.wm{position:absolute;width:228px;height:60px;margin:-34px 0 0 -118px;text-align:center;font-size:56px;line-height:60px;font-weight:400;color:#e4e4e4;transform:rotate(-45deg)}
.a1{left:377px;top:-44px}.a2{left:909px;top:9px}.a3{left:1483px;top:-76px}
.a4{left:61px;top:265px}.a5{left:629px;top:273px}.a6{left:1186px;top:222px}
.a7{left:335px;top:570px}.a8{left:865px;top:542px}.a9{left:1366px;top:429px}
.b1{left:158px;top:430px}.b2{left:711px;top:393px}.b3{left:1256px;top:393px}

/* Status bar */
.status{height:46px;border-top:2px solid #9b9b9b;background:linear-gradient(#dddddd,#bfbfbf);display:flex;align-items:center;font-size:24px;color:#484848;flex:none;white-space:nowrap;padding-left:49px}
.status span{margin-top:-3px}
.t1{width:257px;letter-spacing:.3px}.t2{width:167px}
.book{width:33px;height:27px}
.t3{margin-left:36px}
.right{margin-left:auto;display:flex;align-items:center;height:44px}
.focus{width:30px;height:23px;margin-right:13px}
.seg{margin-left:21px;width:74px;height:46px;background:linear-gradient(#a5a5a5,#8f8f8f);display:flex;align-items:center;justify-content:center}
.seg svg{width:28px;height:27px}
.web{width:33px;height:28px;margin-left:19px}
.outl{width:31px;height:22px;margin-left:40px}
.draft{width:28px;height:22px;margin-left:41px}
.minus{width:17px;height:4px;background:#5a5a5a;margin-left:38px}
.slider{width:199px;height:8px;border-radius:4px;background:#8f8f8f;margin-left:14px;display:flex;align-items:center;padding-left:95px}
.slider i{width:32px;height:32px;border-radius:50%;background:#ececec;box-shadow:0 1px 2px #0006}
.plus{width:17px;height:17px;margin-left:14px}
.t5{width:109px;margin-left:34px}
```
